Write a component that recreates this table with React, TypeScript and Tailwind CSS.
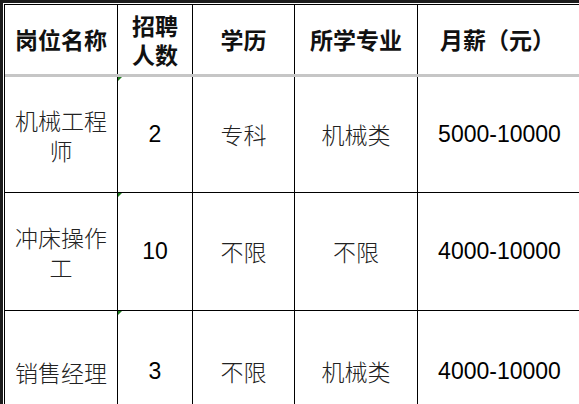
import React from 'react'

const CJK = "font-['Noto_Sans_CJK_SC','Noto_Sans',sans-serif]"
const NUM = "font-['Liberation_Sans',Arial,sans-serif]"

const COLS = 'grid grid-cols-[113px_75px_102px_123px_164px]'

interface Row {
  title: string[]
  count: string
  edu: string
  major: string
  pay: string
  h: string
}

const ROWS: Row[] = [
  { title: ['机械工程', '师'], count: '2', edu: '专科', major: '机械类', pay: '5000-10000', h: 'h-[116px]' },
  { title: ['冲床操作', '工'], count: '10', edu: '不限', major: '不限', pay: '4000-10000', h: 'h-[118px]' },
  { title: ['销售经理'], count: '3', edu: '不限', major: '机械类', pay: '4000-10000', h: 'h-[122px]' },
]

function Cell({ children, className = '' }: { children: React.ReactNode; className?: string }) {
  return (
    <div className={`relative flex flex-col items-center justify-center text-center border-r border-black ${className}`}>
      {children}
    </div>
  )
}

// excel 의 초록 삼각형 표시
function Flag() {
  return (
    <span className="absolute left-0 top-0 w-0 h-0 border-t-[4px] border-r-[4px] border-t-[#1e7b1e] border-r-transparent" />
  )
}

export default function App() {
  return (
    <div className="w-[579px] h-[404px] overflow-hidden bg-[#1c1c1c] pl-[3px] pt-[3px]">
      <div className="w-full h-full bg-white pl-px pt-px overflow-hidden">
        <div className="w-[578px] border-l border-t border-black">
          {/* header */}
          <div className={`${COLS} h-[72px] border-b-[3px] border-b-[#c6c6c6] text-[23px] font-bold text-[#111] leading-[29px] ${CJK}`}>
            <Cell>岗位名称</Cell>
            <Cell>
              <span>招聘</span>
              <span>人数</span>
            </Cell>
            <Cell>学历</Cell>
            <Cell>所学专业</Cell>
            <Cell className="pr-[4px]">月薪（元）</Cell>
          </div>

          {ROWS.map((r, i) => (
            <div key={i} className={`${COLS} ${r.h} border-b border-black`}>
              <Cell className={`text-[23px] leading-[30px] font-light text-[#222] ${CJK}`}>
                {r.title.map((t) => (
                  <span key={t}>{t}</span>
                ))}
              </Cell>
              <Cell className={`text-[23px] text-black ${NUM}`}>
                <Flag />
                {r.count}
              </Cell>
              <Cell className={`text-[23px] font-light text-[#222] ${CJK}`}>{r.edu}</Cell>
              <Cell className={`text-[23px] font-light text-[#222] ${CJK}`}>{r.major}</Cell>
              <Cell className={`text-[23px] text-black ${NUM}`}>{r.pay}</Cell>
            </div>
          ))}
        </div>
      </div>
    </div>
  )
}
